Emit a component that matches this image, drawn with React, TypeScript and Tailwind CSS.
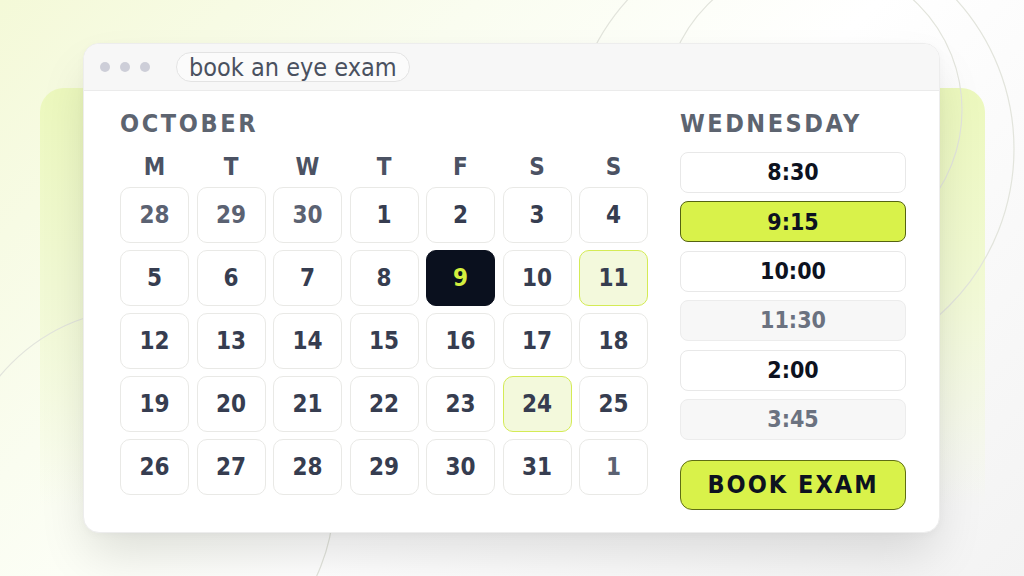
import React from 'react'

type Day = { n: number; muted?: boolean; selected?: boolean; marked?: boolean }

const weeks: Day[][] = [
  [{ n: 28, muted: true }, { n: 29, muted: true }, { n: 30, muted: true }, { n: 1 }, { n: 2 }, { n: 3 }, { n: 4 }],
  [{ n: 5 }, { n: 6 }, { n: 7 }, { n: 8 }, { n: 9, selected: true }, { n: 10 }, { n: 11, marked: true }],
  [{ n: 12 }, { n: 13 }, { n: 14 }, { n: 15 }, { n: 16 }, { n: 17 }, { n: 18 }],
  [{ n: 19 }, { n: 20 }, { n: 21 }, { n: 22 }, { n: 23 }, { n: 24, marked: true }, { n: 25 }],
  [{ n: 26 }, { n: 27 }, { n: 28 }, { n: 29 }, { n: 30 }, { n: 31 }, { n: 1, muted: true }],
]

const weekdays = ['M', 'T', 'W', 'T', 'F', 'S', 'S']

const slots = [
  { time: '8:30' },
  { time: '9:15', selected: true },
  { time: '10:00' },
  { time: '11:30', off: true },
  { time: '2:00' },
  { time: '3:45', off: true },
]

const font = "font-['DejaVu_Sans_Condensed','DejaVu_Sans',sans-serif] [font-stretch:condensed]"

const DayCell: React.FC<{ day: Day }> = ({ day }) => {
  let cls = 'bg-white border-[#e9e9e6] text-[#363d50]'
  if (day.muted) cls = 'bg-white border-[#e9e9e6] text-[#5b6272]'
  if (day.marked) cls = 'bg-[#f3f9dc] border-[#d4eb55] text-[#363d50]'
  if (day.selected) cls = 'bg-[#0a101e] border-[#0a101e] text-[#d4ef3f]'
  return (
    <div
      className={`flex h-[56px] items-center justify-center rounded-[10px] border-[1.5px] text-[24px] font-bold ${cls}`}
    >
      {day.n}
    </div>
  )
}

// faint rings in the background
const Backdrop = () => (
  <svg className="absolute inset-0 h-full w-full" viewBox="0 0 1024 576" fill="none">
    <circle cx="813" cy="110" r="149" stroke="#e2e4dc" strokeWidth="1.2" />
    <circle cx="792" cy="149" r="222" stroke="#e2e4dc" strokeWidth="1.2" />
    <circle cx="145" cy="497" r="189" stroke="#e2e4dc" strokeWidth="1.2" />
  </svg>
)

export default function App() {
  return (
    <div className="relative h-[576px] w-[1024px] overflow-hidden bg-[linear-gradient(135deg,#f4f9d8_0%,#fafdf0_30%,#ffffff_55%,#f3f3f3_100%)]">
      {/* lime panel behind the card */}
      <div className="absolute left-[40px] top-[88px] h-[440px] w-[945px] rounded-[24px] bg-[linear-gradient(to_bottom,#ecf8bd_0%,#f1f9d4_45%,rgba(250,252,240,0)_95%)]" />
      <Backdrop />

      <div className={`relative pl-[83px] pt-[43px] ${font}`}>
        <div className="flex h-[490px] w-[857px] flex-col overflow-hidden rounded-[16px] border border-[#ededed] bg-white shadow-[0_26px_50px_-6px_rgba(0,0,0,0.13),0_2px_8px_rgba(0,0,0,0.03)]">
          {/* window bar */}
          <div className="flex h-[47px] shrink-0 items-center border-b border-[#ebebeb] bg-[#f7f7f7] pl-[16px]">
            <div className="flex gap-[10px]">
              <span className="h-[10px] w-[10px] rounded-full bg-[#cdced8]" />
              <span className="h-[10px] w-[10px] rounded-full bg-[#cdced8]" />
              <span className="h-[10px] w-[10px] rounded-full bg-[#cdced8]" />
            </div>
            <div className="ml-[26px] flex h-[30px] items-center rounded-full border border-[#e3e3e3] bg-[#fbfbfb] px-[12px] text-[25px] leading-none text-[#4a5160]">
              book an eye exam
            </div>
          </div>

          {/* body */}
          <div className="flex pl-[36px] pt-[18px]">
            {/* calendar */}
            <div className="w-[528px]">
              <div className="h-[30px] text-[25px] font-bold leading-[30px] tracking-[2.6px] text-[#5d6470]">OCTOBER</div>
              <div className="mt-[14px] grid grid-cols-7 gap-x-[7.5px]">
                {weekdays.map((d, i) => (
                  <div key={i} className="h-[28px] text-center text-[24px] font-bold leading-[28px] text-[#4b5263]">
                    {d}
                  </div>
                ))}
              </div>
              <div className="mt-[6px] grid grid-cols-7 gap-x-[7.5px] gap-y-[7px]">
                {weeks.flat().map((day, i) => (
                  <DayCell key={i} day={day} />
                ))}
              </div>
            </div>

            {/* times */}
            <div className="ml-[32px] w-[226px]">
              <div className="h-[30px] text-[25px] font-bold leading-[30px] tracking-[2.5px] text-[#5d6470]">WEDNESDAY</div>
              <div className="mt-[13px] flex flex-col gap-[8.4px]">
                {slots.map((s) => (
                  <div
                    key={s.time}
                    className={`flex h-[41px] items-center justify-center rounded-[8px] border-[1.5px] text-[23px] font-bold ${
                      s.selected
                        ? 'border-[#556311] bg-[#d9f24a] text-[#0d1220]'
                        : s.off
                          ? 'border-[#ececec] bg-[#f7f7f7] text-[#6b7280]'
                          : 'border-[#e8e8e8] bg-white text-[#0d1220]'
                    }`}
                  >
                    {s.time}
                  </div>
                ))}
              </div>
              <button className="mt-[20px] flex h-[50px] w-full items-center justify-center rounded-[12px] border-[1.5px] border-[#5f6e14] bg-[#d9f24a] text-[25px] font-bold tracking-[2px] text-[#0d1220]">
                BOOK EXAM
              </button>
            </div>
          </div>
        </div>
      </div>
    </div>
  )
}
